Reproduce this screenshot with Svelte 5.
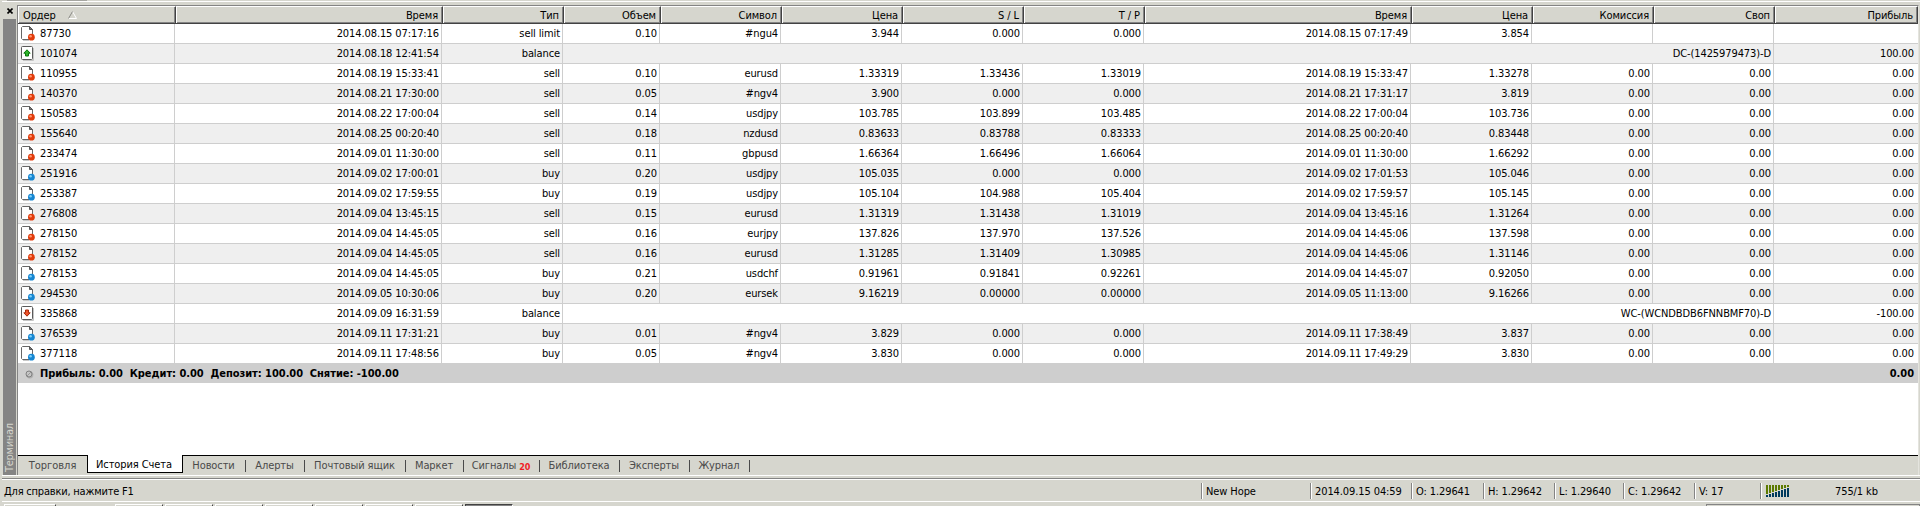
<script lang="ts">
  type Kind = 'sell' | 'buy' | 'in' | 'out';

  const headers = ['Ордер', 'Время', 'Тип', 'Объем', 'Символ', 'Цена', 'S / L', 'T / P', 'Время', 'Цена', 'Комиссия', 'Своп', 'Прибыль'];

  // order | open time | type | volume | symbol | price | s/l | t/p | close time | price
  const history = `87730|2014.08.15 07:17:16|sell limit|0.10|#ngu4|3.944|0.000|0.000|2014.08.15 07:17:49|3.854
101074|2014.08.18 12:41:54|balance|DC-(1425979473)-D|100.00
110955|2014.08.19 15:33:41|sell|0.10|eurusd|1.33319|1.33436|1.33019|2014.08.19 15:33:47|1.33278
140370|2014.08.21 17:30:00|sell|0.05|#ngv4|3.900|0.000|0.000|2014.08.21 17:31:17|3.819
150583|2014.08.22 17:00:04|sell|0.14|usdjpy|103.785|103.899|103.485|2014.08.22 17:00:04|103.736
155640|2014.08.25 00:20:40|sell|0.18|nzdusd|0.83633|0.83788|0.83333|2014.08.25 00:20:40|0.83448
233474|2014.09.01 11:30:00|sell|0.11|gbpusd|1.66364|1.66496|1.66064|2014.09.01 11:30:00|1.66292
251916|2014.09.02 17:00:01|buy|0.20|usdjpy|105.035|0.000|0.000|2014.09.02 17:01:53|105.046
253387|2014.09.02 17:59:55|buy|0.19|usdjpy|105.104|104.988|105.404|2014.09.02 17:59:57|105.145
276808|2014.09.04 13:45:15|sell|0.15|eurusd|1.31319|1.31438|1.31019|2014.09.04 13:45:16|1.31264
278150|2014.09.04 14:45:05|sell|0.16|eurjpy|137.826|137.970|137.526|2014.09.04 14:45:06|137.598
278152|2014.09.04 14:45:05|sell|0.16|eurusd|1.31285|1.31409|1.30985|2014.09.04 14:45:06|1.31146
278153|2014.09.04 14:45:05|buy|0.21|usdchf|0.91961|0.91841|0.92261|2014.09.04 14:45:07|0.92050
294530|2014.09.05 10:30:06|buy|0.20|eursek|9.16219|0.00000|0.00000|2014.09.05 11:13:00|9.16266
335868|2014.09.09 16:31:59|balance|WC-(WCNDBDB6FNNBMF70)-D|-100.00
376539|2014.09.11 17:31:21|buy|0.01|#ngv4|3.829|0.000|0.000|2014.09.11 17:38:49|3.837
377118|2014.09.11 17:48:56|buy|0.05|#ngv4|3.830|0.000|0.000|2014.09.11 17:49:29|3.830`;

  const rows = history.split('\n').map((line) => {
    const cells = line.split('|');
    const balance = cells[2] === 'balance';
    let kind: Kind = cells[2] === 'buy' ? 'buy' : 'sell';
    if (balance) kind = cells[4].startsWith('-') ? 'out' : 'in';
    // pending orders carry no commission, swap or profit
    const money = cells[2] === 'sell limit' ? '' : '0.00';
    return { kind, balance, cells: balance ? cells : [...cells, money, money, money] };
  });

  const tabs = [
    { label: 'Торговля', width: 69 },
    { label: 'История Счета', width: 96 },
    { label: 'Новости', width: 63 },
    { label: 'Алерты', width: 59 },
    { label: 'Почтовый ящик', width: 101 },
    { label: 'Маркет', width: 58 },
    { label: 'Сигналы', width: 76, badge: '20' },
    { label: 'Библиотека', width: 80 },
    { label: 'Эксперты', width: 70 },
    { label: 'Журнал', width: 60 },
  ];
  let active = $state(1);

  const status = [
    { text: 'New Hope', width: 109 },
    { text: '2014.09.15 04:59', width: 101 },
    { text: 'O: 1.29641', width: 72 },
    { text: 'H: 1.29642', width: 71 },
    { text: 'L: 1.29640', width: 69 },
    { text: 'C: 1.29642', width: 71 },
    { text: 'V: 17', width: 66 },
  ];

  const bars = [0, 1, 2, 3, 4, 5, 6, 7];
  const windows = [0, 1, 2, 3, 4, 5, 6, 7];
</script>

<div class="app">
  <div class="toolbar"></div>

  <div class="terminal">
    <aside class="caption">
      <button class="close" aria-label="close">
        <svg width="6" height="6" viewBox="0 0 6 6"><path d="M0.5 0.5L5.5 5.5M5.5 0.5L0.5 5.5" stroke="#000" stroke-width="1.6" /></svg>
      </button>
      <div class="grip"><span>Терминал</span></div>
    </aside>

    <div class="panel">
      <div class="grid head">
        {#each headers as title, i}
          <div class="th">
            <span>{title}</span>
            {#if i === 0}
              <svg class="sort" width="9" height="8" viewBox="0 0 9 8">
                <path d="M4.5 0.5L8.5 7.5H0.5" stroke="#fff" fill="none" />
                <path d="M4.5 0.5L0.5 7.5" stroke="#8b8b86" fill="none" />
              </svg>
            {/if}
          </div>
        {/each}
      </div>

      {#each rows as row}
        <div class="grid row">
          {#each row.cells as cell, i}
            <div class="td" class:wide={row.balance && i === 3}>
              {#if i === 0}{@render icon(row.kind)}{/if}
              <span>{cell}</span>
            </div>
          {/each}
        </div>
      {/each}

      <div class="total">
        <svg width="9" height="9" viewBox="0 0 9 9">
          <circle cx="4.8" cy="4.8" r="3.6" fill="#b0b0b0" />
          <circle cx="4" cy="4" r="3" fill="#c6c6c6" stroke="#808080" />
          <path d="M2 6L6 2" stroke="#999" />
        </svg>
        <span class="sum">Прибыль: 0.00&nbsp; Кредит: 0.00&nbsp; Депозит: 100.00&nbsp; Снятие: -100.00</span>
        <span class="profit">0.00</span>
      </div>

      <div class="blank"></div>

      <nav class="tabs">
        {#each tabs as tab, i}
          <button class="tab" class:active={active === i} class:plain={i === 0} style="width: {tab.width}px" onclick={() => (active = i)}>
            {tab.label}{#if tab.badge}<b>{tab.badge}</b>{/if}
          </button>
        {/each}
      </nav>
    </div>
  </div>

  <footer class="status">
    <span class="help">Для справки, нажмите F1</span>
    {#each status as item}
      <span class="item" style="width: {item.width}px">{item.text}</span>
    {/each}
    <span class="item traffic">
      <svg width="23" height="12" viewBox="0 0 23 12" shape-rendering="crispEdges">
        {#each bars as n}
          <rect x={n * 3} y="0" width="2" height={9 - n} fill="#5c7a00" />
          <rect x={n * 3} y={10 - n} width="2" height={2 + n} fill="#003a5c" />
        {/each}
      </svg>
      <span>755/1 kb</span>
    </span>
  </footer>

  <div class="taskbar">
    <i class="first"></i>
    {#each windows as n}
      <i class:pressed={n === 7}></i>
    {/each}
    <i class="tray"></i>
  </div>
</div>

{#snippet icon(kind: Kind)}
  {#if kind === 'in' || kind === 'out'}
    <svg class="icon" width="15" height="15" viewBox="0 0 15 15">
      <path d="M2 14.5H12.5V2" stroke="#c4c4c4" fill="none" />
      <rect x="0.5" y="0.5" width="11" height="13" rx="1" fill="#fff" stroke="#5a5a5a" />
      {#if kind === 'in'}
        <path d="M6 3.8L9.2 7.2H7.5V10H4.5V7.2H2.8Z" fill="#2fb52b" stroke="#08780c" />
      {:else}
        <path d="M6 10.2L9.2 6.8H7.5V4H4.5V6.8H2.8Z" fill="#f0532a" stroke="#a52a0c" />
      {/if}
    </svg>
  {:else}
    <svg class="icon" width="15" height="15" viewBox="0 0 15 15">
      <path d="M2 14.5H8" stroke="#c8c8c8" />
      <path d="M1.5 0.5H8.5L11.5 3.5V13.5H1.5L0.5 12.5V1.5Z" fill="#fff" stroke="#666" />
      <path d="M8.5 0.5V3.5H11.5Z" fill="#777" stroke="#555" />
      <circle cx="10.4" cy="11.2" r="3.4" fill={kind === 'sell' ? '#e23c0c' : '#1686d2'} />
      <circle cx="9.6" cy="10.2" r="1.2" fill={kind === 'sell' ? '#ff9a74' : '#7fd0f8'} />
    </svg>
  {/if}
{/snippet}

<style>
  :global(body) { background: #d6d6ce; overflow: hidden; }

  .app {
    display: flex;
    flex-direction: column;
    width: 1920px;
    height: 506px;
    overflow: hidden;
    background: #d6d6ce;
    color: #000;
    font-family: 'DejaVu Sans Condensed', 'DejaVu Sans', sans-serif;
    font-stretch: condensed;
    font-size: 11px;
    line-height: 13px;
    letter-spacing: -0.1px;
    white-space: nowrap;
  }

  button {
    margin: 0; padding: 0;
    border: 0;
    background: none;
    font: inherit;
    letter-spacing: inherit;
    color: inherit;
  }

  .toolbar {
    flex: none;
    height: 1px;
    margin-left: 2px;
    border-bottom: 1px solid #fff;
    background: linear-gradient(90deg, #d6d6ce 5px, #a5a5a0 5px, #a5a5a0 85px, #d6d6ce 85px);
  }

  .terminal {
    display: flex;
    flex: none;
    height: 473px;
    margin-left: 2px;
    border-bottom: 1px solid #fff;
  }

  .caption {
    display: flex;
    flex-direction: column;
    width: 15px;
    padding-left: 1px;
    box-sizing: border-box;
  }
  .close { display: flex; height: 17px; padding: 6px 0 0 4px; box-sizing: border-box; }
  .grip {
    display: flex;
    flex: 1;
    width: 13px;
    background: #848484;
    color: #d6d6ce;
  }
  .grip span {
    writing-mode: vertical-rl;
    transform: rotate(180deg);
    line-height: 13px;
    padding-top: 3px;
    letter-spacing: -0.3px;
  }

  .panel {
    display: flex;
    flex-direction: column;
    width: 1900px;
    margin-top: 3px;
    border-top: 1px solid #848484;
    border-left: 1px solid #848484;
    border-right: 1px solid #e4e4de;
    background: #fff;
  }

  .grid {
    display: grid;
    grid-template-columns: 157px 267px 121px 97px 121px 121px 121px 121px 267px 121px 121px 121px 144px;
  }

  .head {
    grid-template-columns: 158px 267px 121px 97px 121px 121px 121px 121px 267px 121px 121px 121px 143px;
    flex: none;
    height: 17px;
    background: #d6d6ce;
    border-bottom: 1px solid #424242;
  }
  .th {
    display: flex;
    justify-content: flex-end;
    box-sizing: border-box;
    padding: 2px 4px 0 0;
    border-top: 1px solid #fff;
    border-left: 1px solid #fff;
    border-right: 1px solid #424242;
    box-shadow: inset -1px -1px #848484;
  }
  .th:first-child { justify-content: flex-start; padding-left: 4px; }
  .sort { margin: 2px 0 0 12px; }

  .row { flex: none; height: 20px; }
  .row:nth-child(odd) { background: #efefef; }
  .td {
    display: flex;
    justify-content: flex-end;
    box-sizing: border-box;
    padding: 3px 2px 0 0;
    border-right: 1px solid #cecece;
    border-bottom: 1px solid #cecece;
  }
  .td:first-child { justify-content: flex-start; padding-left: 3px; }
  .td:last-child { padding-right: 4px; border-right: 0; }
  .td.wide { grid-column: span 9; }
  .icon { flex: none; margin-right: 4px; margin-top: -1px; }

  .total {
    display: flex;
    flex: none;
    height: 20px;
    box-sizing: border-box;
    padding: 4px 4px 0 7px;
    margin-top: -1px;
    background: #cecece;
    font-weight: bold;
    letter-spacing: -0.04px;
  }
  .total svg { margin: 3px 6px 0 0; }
  .profit { margin-left: auto; }

  .blank { flex: 1; }

  .tabs {
    display: flex;
    flex: none;
    height: 19px;
    border-top: 1px solid #000;
    background: #d6d6ce;
    color: #4a4a4a;
  }
  .tab {
    display: flex;
    justify-content: center;
    position: relative;
    height: 19px;
    padding: 3px 2px 0 0;
    box-sizing: border-box;
  }
  .tab.plain { padding-right: 0; letter-spacing: 0; }
  .tab::after {
    content: '';
    position: absolute;
    right: 0;
    top: 4px;
    width: 1px;
    height: 12px;
    background: #4a4a4a;
  }
  .tab.plain::after { display: none; }
  .tab.active {
    height: 18px;
    margin-top: -1px;
    border: 1px solid #000;
    border-top: 0;
    background: #fff;
    color: #000;
  }
  .tab.active::after { display: none; }
  .tab b { margin: 2px 0 0 3px; font-size: 9px; color: #f01c24; }

  .status {
    display: flex;
    flex: none;
    height: 22px;
    margin: 2px 0 0 2px;
    border-top: 1px solid #848484;
    border-bottom: 1px solid #fff;
    box-shadow: inset 0 1px #fff;
  }
  .help { flex: 1; padding: 6px 0 0 2px; letter-spacing: -0.2px; }
  .item {
    height: 16px;
    margin-top: 4px;
    padding: 2px 0 0 4px;
    box-sizing: border-box;
    border-left: 1px solid #848484;
    box-shadow: inset 1px 0 #fff;
  }
  .traffic { display: flex; width: 160px; padding-left: 5px; }
  .traffic span { margin-left: 46px; }

  .taskbar { display: flex; flex: 1; padding: 2px 0 0 4px; }
  .taskbar i {
    width: 48px;
    margin-right: 2px;
    box-sizing: border-box;
    border-top: 1px solid #fff;
    border-left: 1px solid #fff;
    border-right: 1px solid #424242;
  }
  .taskbar .first { width: 52px; margin-right: 59px; }
  .taskbar .pressed { background: #848484; border-color: #424242 #fff #424242 #424242; }
  .taskbar .tray { width: auto; flex: 1; margin: 0 0 0 1191px; border-color: #848484; }
</style>
